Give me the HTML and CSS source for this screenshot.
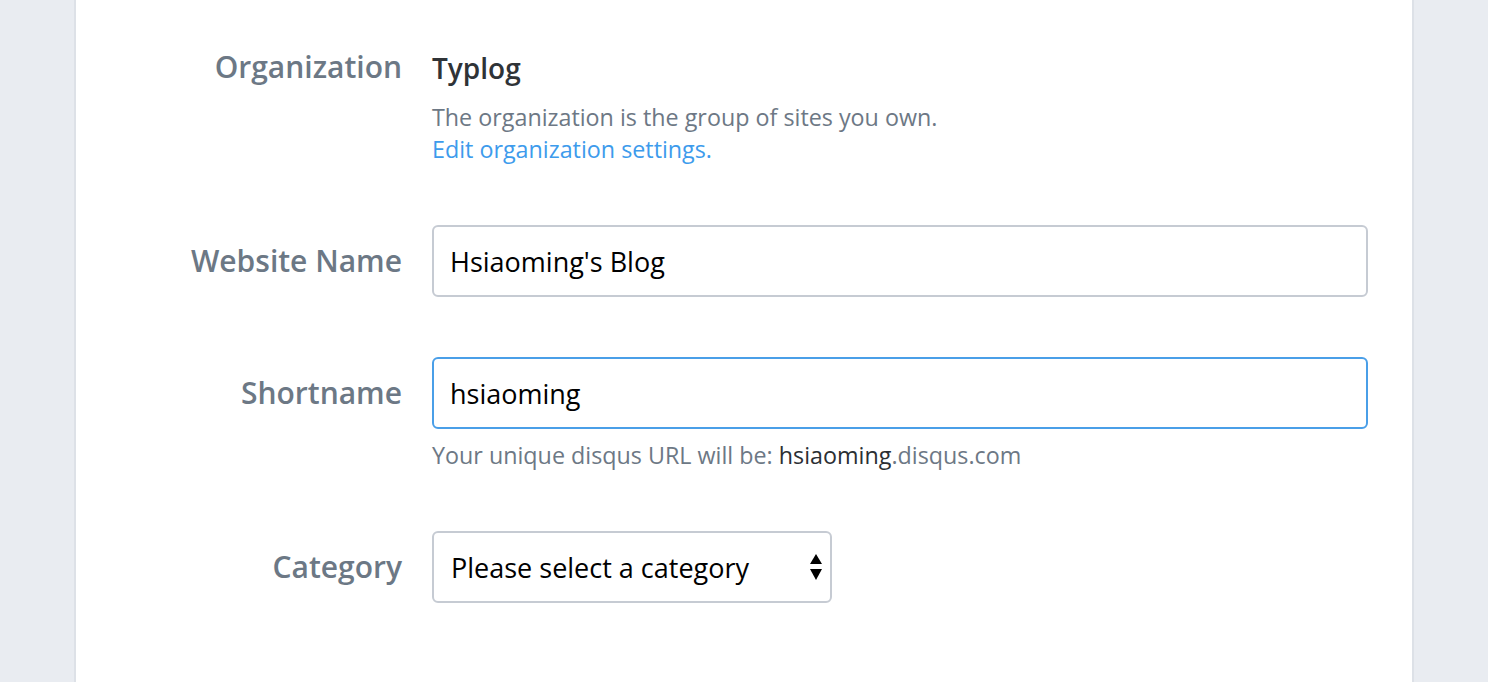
FILE: index.html
```html
<!DOCTYPE html>
<html lang="en">
<head>
<meta charset="utf-8">
<title>Website settings</title>
<link rel="stylesheet" href="styles.css">
</head>
<body>
<div class="card">
  <form class="form">
    <div class="row row-top">
      <div class="label">Organization</div>
      <div class="field">
        <div class="org-name">Typlog</div>
        <p class="desc">The organization is the group of sites you own.<br><a class="link" href="#">Edit organization settings.</a></p>
      </div>
    </div>
    <div class="row">
      <label class="label" for="name">Website Name</label>
      <div class="field">
        <input id="name" class="input" type="text" value="Hsiaoming's Blog">
      </div>
    </div>
    <div class="row row-top-input">
      <label class="label label-input" for="short">Shortname</label>
      <div class="field">
        <input id="short" class="input input-focus" type="text" value="hsiaoming">
        <p class="help">Your unique disqus URL will be: <span class="strong">hsiaoming</span>.disqus.com</p>
      </div>
    </div>
    <div class="row">
      <label class="label" for="cat">Category</label>
      <div class="field">
        <div class="select-wrap">
          <select id="cat" class="select">
            <option>Please select a category</option>
          </select>
          <svg class="arrows" width="14" height="28" viewBox="0 0 14 28"><path d="M7 1 L13 11 L1 11 Z" fill="#000"/><path d="M1 16 L13 16 L7 27 Z" fill="#000"/></svg>
        </div>
      </div>
    </div>
  </form>
</div>
</body>
</html>
```

FILE: styles.css
```css
html, body {
  margin: 0;
  padding: 0;
  height: 100%;
  overflow: hidden;
}
body {
  background: #e9ecf1;
  font-family: "Open Sans", "Lato", sans-serif;
}
.card {
  margin: 0 74px;
  height: 100%;
  background: #fff;
  border-left: 2px solid #dde1e7;
  border-right: 2px solid #dde1e7;
  box-sizing: border-box;
  padding-top: 49px;
}
.form {
  display: flex;
  flex-direction: column;
  gap: 60px;
}
.row {
  display: flex;
  align-items: center;
  gap: 30px;
  padding-right: 44px;
}
.row-top, .row-top-input {
  align-items: flex-start;
}
.label {
  width: 326px;
  flex: none;
  text-align: right;
  font-size: 30px;
  line-height: 36px;
  font-weight: 600;
  color: #6c7885;
}
.label-input {
  margin-top: 18px;
}
.field {
  flex: 1;
  min-width: 0;
}
.org-name {
  font-size: 28px;
  line-height: 36px;
  font-weight: 600;
  color: #2f3337;
  margin-top: 1px;
}
.desc {
  margin: 15px 0 0;
  font-size: 23.3px;
  line-height: 32px;
  color: #6d7885;
}
.link {
  color: #3d9bec;
  text-decoration: none;
}
.input, .select {
  display: block;
  box-sizing: border-box;
  width: 100%;
  height: 72px;
  border: 2px solid #c6cbd3;
  border-radius: 6px;
  padding: 0 16px;
  font-family: inherit;
  font-size: 27px;
  color: #000;
  background: #fff;
  outline: none;
}
.input-focus {
  border-color: #4a9fe8;
}
.help {
  margin: 10px 0 0;
  font-size: 23.3px;
  line-height: 32px;
  color: #6d7885;
}
.strong {
  color: #2b2f33;
}
.select-wrap {
  position: relative;
  width: 400px;
}
.select {
  appearance: none;
  -webkit-appearance: none;
  padding-left: 17px;
}
.arrows {
  position: absolute;
  right: 9px;
  top: 22px;
  pointer-events: none;
}
```
